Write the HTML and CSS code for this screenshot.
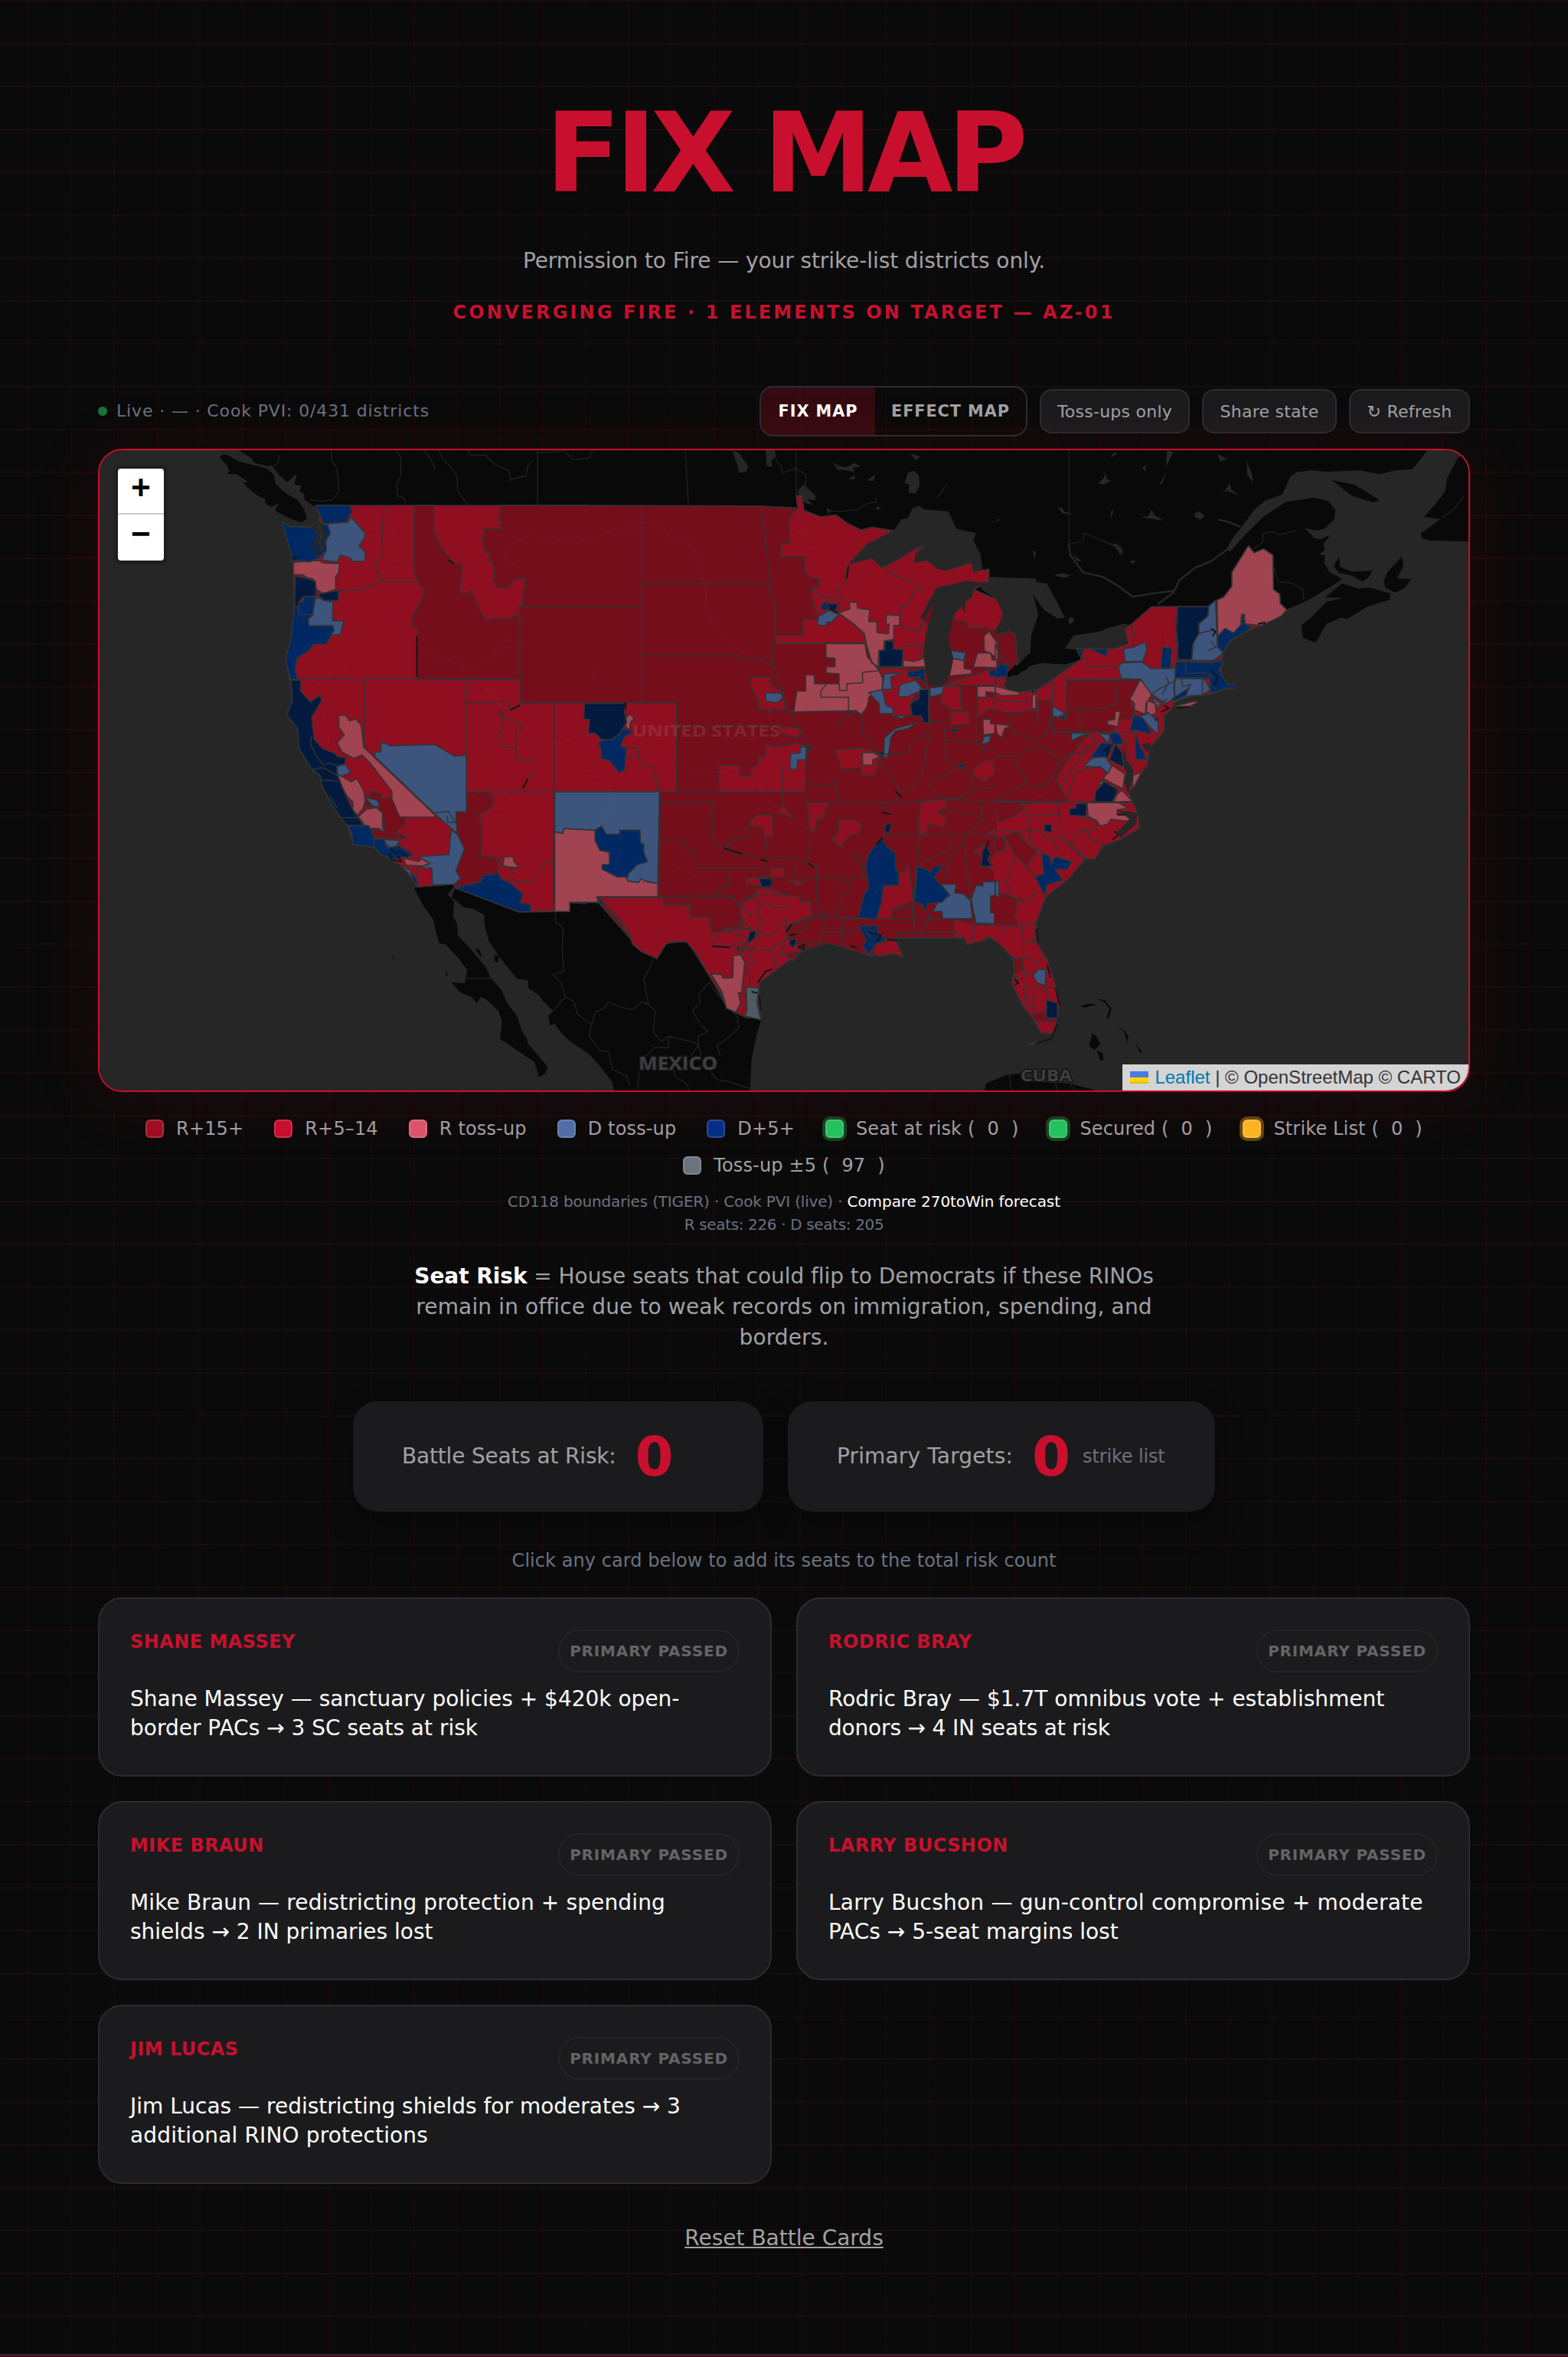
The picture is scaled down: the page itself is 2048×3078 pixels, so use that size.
FILE: index.html
```html
<!DOCTYPE html>
<html lang="en">
<head>
<meta charset="utf-8">
<title>Fix Map</title>
<link rel="stylesheet" href="styles.css">
</head>
<body>
<main class="page">
  <header class="hero">
    <h1 class="hero-title">FIX MAP</h1>
    <p class="hero-sub">Permission to Fire — your strike-list districts only.</p>
    <p class="hero-alert">CONVERGING FIRE · 1 ELEMENTS ON TARGET — AZ-01</p>
  </header>

  <div class="toolbar">
    <div class="status"><span class="status-dot"></span><span>Live · — · Cook PVI: 0/431 districts</span></div>
    <div class="controls">
      <div class="segment"><button class="seg seg-on">FIX MAP</button><button class="seg">EFFECT MAP</button></div>
      <button class="btn btn-toss">Toss-ups only</button>
      <button class="btn btn-share">Share state</button>
      <button class="btn btn-refresh">↻ Refresh</button>
    </div>
  </div>

  <section class="map">
    <svg class="map-canvas" viewBox="130 588 1788 836">
      <rect class="water" x="130" y="588" width="1788" height="836"/>
      <!-- Canada and Mexico -->
      <g transform="translate(120 580) scale(.40816)">
        <path class="land" d="M408 42L420 32 440 38 470 55 560 78 580 95 590 130 625 160 660 180 680 210 688 240 670 250 640 240 585 213 598 190 575 200 555 190 555 175 530 165 500 140 485 125 500 120 460 95 432 96 440 85 430 65Z"/>
        <path class="land" d="M455 10L490 32 512 45 520 60 560 70 575 68 600 100 625 122 655 95 648 130 670 132 665 150 680 160 680 178 710 198 1600 198 1600 10Z"/>
        <path class="river" d="M600 35L596 60 580 70M765 20L768 50 785 80 790 150 770 178 740 183 700 178M972 20L990 45 988 100 975 130 978 165 1000 172 1003 192M1065 20L1085 50 1100 82M1110 20L1125 50 1150 75 1168 100 1170 150 1203 192M1203 20L1210 35 1260 35 1290 65 1335 85 1340 115 1370 105 1390 102 1395 70 1428 30 1520 28 1530 48 1580 50M1428 20V195"/>
      </g>
      <g transform="translate(700 580) scale(.40816)">
        <path class="land" d="M-10 10H1600V900H900V400L700 200H-10Z"/>
        <path class="river" d="M5 20V195M0 28L90 22 120 50 170 45 180 20M478 20L488 195M833 20V170M765 48L785 70 788 92 830 78 865 98 862 130 880 160M930 215L980 215 1030 210 1060 190 1090 185 1090 168M1285 170L1315 128"/>
        <path class="water" d="M628 20L650 28 665 50 680 72 672 88 650 92 642 60ZM735 20H765L768 40 755 50 754 72 738 70ZM1190 92L1210 85 1225 100 1228 130 1215 158 1192 155 1195 130 1180 125ZM838 150L855 130 895 165 893 180 870 175 885 195 865 190 845 175ZM950 55L965 68 990 75 1020 60 1040 72 1015 75 1020 90 985 82 965 82ZM1200 30L1230 40 1215 52ZM1000 112L1020 98 1020 112ZM1060 115L1085 98 1080 118ZM930 205L945 212 935 225ZM1460 245L1488 238 1465 256ZM1085 205L1105 198 1095 212Z"/>
      </g>
      <g transform="translate(1300 580) scale(.40816)">
        <path class="land" d="M-10 10H1390L1335 80 1278 84 1230 96 1170 84 1060 88 1010 83 965 90 945 102 918 162 865 180 830 208 790 262 760 300 740 335 750 345 800 290 860 230 930 185 1020 171 1065 182 1088 210 1085 240 1055 270 1030 276 990 268 1020 300 1040 305 1072 290 1050 320 1055 340 1035 352 1055 356 1052 380 1070 410 1110 432 1075 455 1000 500 930 530 700 600 0 800Z"/>
        <path class="land" d="M1055 490L1110 445 1160 462 1200 460 1265 478 1262 498 1190 520 1125 560 1105 555 1060 575 1025 635 985 620 980 580 1015 550 1060 505 1115 492ZM1243 440L1255 410 1300 360 1306 390 1285 430 1332 432 1310 460 1280 475 1248 460ZM1083 390L1100 360 1103 392 1140 408 1208 405 1195 425 1175 440 1140 420 1100 412ZM1076 115L1150 130 1228 178 1210 187 1140 165ZM1516 18V312L1390 308 1364 300 1362 285 1425 240 1372 233 1410 190 1440 150 1445 110 1480 45Z"/>
        <path class="riverw" d="M745 335L690 375 640 395 590 435 570 475 520 512M570 470L520 475 440 488 395 455 345 425 280 410 240 355 234 320M785 265L750 250 712 241"/>
        <path class="river" d="M236 20V320L280 310 285 285 320 300 370 320 400 330 410 355M825 335L855 315 858 285 885 280 910 290 965 275M890 390L905 440 950 445 985 465 985 500M1500 165L1470 205 1430 235M0 250L15 240"/>
        <path class="water" d="M470 75L495 60 480 72 482 90ZM550 20L570 25 545 75 548 45ZM710 30L730 42 745 48 720 55ZM805 50L812 75 820 90 825 125 805 95ZM715 155L735 150 750 125 755 145 780 165 745 150ZM330 125L350 105 350 85 356 110 368 118 390 110 345 130ZM465 235L490 230 500 210 510 228 540 245 500 238ZM636 222L655 215 670 230 655 242 638 232ZM198 200L215 205 220 215 250 225 215 222ZM250 350L258 360 278 375 260 375ZM188 420L215 413 242 420 220 428ZM430 375L450 370 440 385ZM232 565L240 552 255 560 240 578ZM120 340L130 345 125 370ZM525 130L545 90 535 125ZM380 25L392 30 370 42ZM370 215L380 212 368 240ZM340 310L365 322 390 318 408 340 400 355 385 330Z"/>
      </g>
      <g transform="translate(500 1000) scale(.40816 .33333)">
        <path class="land" d="M100 478L232 465 207 505 228 530 225 590 238 620 240 665 275 710 300 745 330 790 345 830 380 880 400 935 430 980 445 1040 460 1065 465 1090 490 1125 528 1180 520 1205 500 1220 490 1180 485 1160 430 1115 375 1070 382 1000 370 960 330 915 315 905 300 930 285 905 250 890 218 848 262 852 270 800 240 750 200 700 180 695 160 600 130 550Z"/>
        <path class="land" d="M232 480L435 573H598V536H700L780 630 800 700 878 757 905 700 972 690 1040 815 1100 950 1212 990 1195 1060 1180 1150 1175 1275H740L735 1240 690 1170 660 1130 600 1080 570 1045 550 1010 535 1018 530 980 545 960 515 925 500 900 465 870 465 840 430 835 380 760 340 690 325 620 325 585 290 560 260 555 220 515Z"/>
        <path class="land" d="M296 712L310 722 318 750 305 738ZM358 740L372 745 368 772 357 765ZM200 805L208 815 205 828ZM28 740L36 752 35 762ZM20 400L32 412M20 435L32 452"/>
        <path class="river" d="M262 833H345M553 575L552 612 577 635 575 720 578 805 545 818 570 850 585 905 545 960M585 905L612 925 622 972 668 1015 660 1060 695 1115 722 1120 735 1190 780 1215 790 1250M668 1015L680 965 710 950 720 925 760 945 800 955 830 925 850 935 872 960 865 1040 890 1080 915 1060 1000 1085 1010 1095 985 1140M868 757L835 835 850 935M915 1060V1105L870 1103 840 1140M1045 850L1010 895 1015 930 990 960 1020 1020 1040 1040 1010 1060 1010 1095 1020 1140M1045 850L1065 885 1080 910 1110 945 1135 985 1138 1030 1100 1070 1070 1095 1080 1140M930 1190L935 1215 975 1250 980 1272M820 1195L815 1272M1050 1200L1070 1230 1100 1235 1150 1255 1175 1265"/>
      </g>

      <!-- West -->
      <g transform="translate(120 580) scale(.40816)">
        <path class="r1" d="M718 196H1580V1470L1528 1466V1495L1368 1497 1163 1420 1160 1408 1043 1416 1020 1385 985 1345 930 1312 900 1290 835 1280 820 1225 765 1150 735 1090 730 1060 703 1040 663 975 658 910 624 865 640 825V790L633 755 630 730 620 690 637 620 648 520 645 420 643 380 636 345 608 247 630 262 700 266 720 250 730 230Z"/>
        <path class="r2" d="M1033 196H1093V280L1112 310 1110 322 1162 385H1185L1182 440 1175 465 1190 483 1212 467 1240 530 1262 562 1300 556 1345 558 1356 542 1370 560V753H1040L1042 590 1023 575 1028 548 1045 520 1068 470 1042 440 1033 410ZM1305 196H1580V828H1372L1368 520H1376L1387 427 1352 432 1330 461 1300 458 1285 440 1290 405 1283 378 1270 375 1272 348 1258 346 1250 305 1258 270H1310L1312 250 1300 245 1308 230ZM1200 1112H1270L1272 1130H1285L1283 1155 1262 1175 1238 1180 1245 1215V1318L1297 1322 1300 1370 1250 1382 1245 1400 1168 1418 1165 1365 1192 1295 1168 1245 1165 1178H1200ZM885 1130L892 1108 925 1118 930 1135 962 1132 985 1193H1003V1218L970 1243 1005 1253V1262L905 1258 880 1230 930 1240 938 1225 930 1180 910 1162 870 1158Z"/>
        <path class="r3" d="M645 378L725 372 740 380 792 382 790 410 780 425V465L742 478 718 465 715 440 705 430 690 428 675 418H645ZM790 868H812L825 885 845 880 862 900 870 970 1105 1193H985L960 1135V1110L940 1085 910 1045 885 1015 865 995 838 1005 800 985 785 955 808 930 790 905ZM785 1055L830 1080 848 1070 870 1110 875 1140 868 1165 850 1187 835 1170V1145L815 1125 800 1095ZM853 1192L880 1168 910 1163 930 1180V1225L938 1243 920 1230 880 1228ZM998 1325L1045 1335 1060 1322 1082 1342 1060 1350 1005 1347ZM1320 1320H1348L1350 1335 1368 1355 1313 1352ZM1480 1240L1503 1247 1508 1230H1580V1466H1528V1495H1480Z"/>
        <path class="b1" d="M750 255L820 250 830 233 848 255 875 285 872 300 855 325 875 345V375H830L828 365 795 355 785 378 735 370 750 340 748 310 763 285ZM720 488L742 500 772 505 770 565H806L795 608 762 614 775 595 770 580 695 582 692 560 708 545V515ZM925 952L955 965 1098 961 1160 998 1198 995V1176H1165L1168 1245 1105 1190 906 1000V985H925ZM1150 1235L1170 1248 1192 1295 1165 1365 1180 1390 1160 1408 1090 1410 1088 1357 1045 1355 1082 1342 1045 1320 1142 1313ZM785 1030L810 1025 830 1050 800 1062 785 1055ZM935 1265L987 1268 965 1298 940 1280ZM873 1130L915 1140 920 1162 900 1158ZM1480 1112H1580V1232L1508 1230 1503 1247 1480 1240ZM985 1345L1020 1365 1025 1385Z"/>
        <path class="b2" d="M718 196H825L832 215 815 248 740 255 730 230ZM608 247L632 263 700 266 720 245 735 255 755 260 763 285 748 310 750 340 725 365 695 377 665 373 640 375 636 345ZM648 520H662V545H705L692 560 695 582 770 580 775 595 750 640H710L695 660 657 685 650 720 658 752H636L620 690 637 620ZM662 505H675L678 487 712 490V515L705 545H662ZM1163 1420L1245 1400 1250 1382 1300 1373 1310 1392 1340 1405 1380 1440 1370 1468 1402 1472 1405 1495 1368 1497ZM820 1222L885 1220 903 1258V1290L835 1280 833 1250ZM905 1262L935 1265 945 1292 985 1285 1030 1315 960 1330 925 1312 903 1290ZM1023 1370L1040 1390 1043 1416 1028 1400Z"/>
        <path class="b3" d="M650 422L690 430 715 440 718 487H678L662 505V520L648 518ZM722 480L790 468 788 500 742 500ZM636 755H668V790L700 825 730 803 735 820 718 850 703 875 712 945 740 975 780 990 785 1000 812 1003 810 1022 785 1030V1055L800 1095 835 1170 870 1220H815L765 1150 735 1090 730 1060 703 1040 663 975 658 910 624 865 640 825V790Z"/>
        <path class="water" d="M700 266L712 250 705 225 722 240 740 260 748 290 742 335 715 352 707 342 735 325 730 305 718 330 698 332 712 310 722 290Z"/>
        <path class="edge" d="M935 196L925 365 903 390 925 420V440M925 440H1040M780 470L860 465 925 440M636 752H1370M872 755V970M1198 755V1000M1200 828H1275L1320 820 1345 850 1380 830H1580M1480 828V1495M1200 1112H1580M1040 610V753M1368 520H1580M1305 850L1325 880 1360 885 1380 910 1357 912V1010H1425L1435 1028 1400 1065 1375 1105M1305 850L1313 910 1297 930 1318 970H1357M1345 850L1320 850M703 935L700 960 720 1000 740 1025 765 1020 785 1030M705 1040L740 1035 785 1060M735 1075L785 1078M760 1125L785 1165M803 1195H850M1088 1180L1140 1175 1165 1210M1138 1190V1210H1165M1320 1392L1400 1400 1425 1385 1450 1385 1460 1340 1480 1332M1043 1416L1040 1355M725 255L735 285 728 320 740 340M1300 1322L1310 1345 1350 1360 1345 1375"/>
        <path class="coast" d="M640 360L655 362 645 370M955 1295L975 1310 990 1335 960 1330 950 1310M740 1045L755 1055 745 1065M1160 383L1140 370M1040 615V745M980 1300L1010 1320M1380 1100L1395 1070M1340 850L1370 835"/>
        <path class="vein" d="M875 275L900 272 920 265 935 290 960 285 975 225 1000 200M930 410L960 390 980 395 1005 385 1030 410M1375 400L1320 360 1330 330 1420 278 1440 295 1520 300 1568 320M1040 640L1100 680 1200 710 1260 700 1320 625 1390 640M670 800L720 770 760 750 770 715 820 720M735 840L760 930 755 960M1568 930L1520 950 1480 1010 1440 1040M1200 1112L1290 1170 1320 1165 1350 1120M1262 780L1290 800 1310 845 1280 820Z"/>
      </g>

      <!-- Center -->
      <g transform="translate(700 580) scale(.40816)">
        <path class="r2" d="M0 196L720 198 838 205 910 232 1040 275 1145 277 1005 380 1075 365 1245 323 1448 442 1400 465 1480 500 1495 545 1480 590 1520 595 1545 640 1540 705 1500 750 1580 790V1580H300L200 1466H108V1495H0Z"/>
        <path class="r1" d="M838 205L833 165H850L858 213 910 232 960 227 1000 255 1040 275 1075 266 1145 277 1060 320 1005 380 1075 365 1110 395 1200 345 1245 323 1210 375 1250 372 1310 405 1395 378 1400 408 1450 400 1448 442 1370 445 1300 455 1260 500 1235 560 1255 580 1245 713H1098L1060 655 1053 637H765V612H853V560H905L885 500 878 460 905 455V430L880 428 860 412V360H783V318H812L810 235ZM1400 465L1480 500 1495 545 1480 590 1445 600 1445 587H1382L1380 568 1335 560 1340 540 1395 490ZM1305 770L1395 740 1450 720 1510 750 1490 772 1412 772ZM0 828H450V1112H58V1495H0ZM687 745H752V770L790 795 800 850 755 848 750 862 735 848H713L710 812 690 780ZM587 1028L652 1025V1062H690V1032L710 1028 712 1000H735V960L765 968 815 962 835 955 865 965 862 1112H587ZM775 903L830 905 850 918 835 940 780 925ZM952 978L1045 973 1085 985 1105 990 1085 1060H1042L1038 1035 975 1040 970 1010ZM1095 718L1190 716 1225 780 1200 830V870L1150 875 1100 830 1108 750ZM1412 812L1540 805 1568 830 1560 850 1440 848 1430 870H1412ZM1295 775H1358L1362 850H1330L1297 830ZM1325 855H1383L1388 895 1330 900ZM200 1450L405 1448 408 1473H495L497 1513H558V1563L600 1580H300L270 1530ZM687 1203L710 1185 757 1188 760 1255H730L727 1228 687 1220ZM868 1147H940L925 1175 920 1200H898L895 1238H875ZM968 1200L1025 1203 1045 1220 1030 1248 1005 1250 975 1290 945 1265 968 1240ZM1112 1415L1160 1412 1163 1370 1180 1368 1182 1348H1195L1207 1460 1140 1490V1520H1088ZM1232 1138H1313L1310 1165 1283 1175 1310 1190V1225L1255 1215 1250 1250H1225V1200ZM1400 1040L1430 1015 1480 1008 1460 1030 1475 1050 1435 1078 1400 1060ZM1443 1250L1475 1215 1580 1180V1580L1530 1500 1520 1370 1450 1360 1460 1320 1520 1300 1568 1310 1568 1250ZM650 1470L690 1445 715 1420 760 1425 805 1445 880 1505 800 1515 740 1560 700 1580 655 1540 700 1480ZM748 1357H793V1385H750ZM808 1392L860 1400 835 1415ZM1338 1520L1400 1535 1530 1540V1580H1338ZM775 1180L790 1150 820 1195ZM672 1388L735 1385 715 1412 672 1408ZM1400 1300L1435 1280 1425 1320Z"/>
        <path class="r3" d="M928 638H1053L1060 680 1095 720 1110 750 1108 785 1065 810 1060 840 1042 865 1025 853 825 857 835 790H863V738H890L892 767H970V735L928 732 930 712H957V685L928 683ZM968 540L1005 527 1002 506H1027L1030 525 1068 530 1065 568H1090L1092 603 1128 607 1130 575H1120L1122 545 1165 550 1163 580H1145V625L1115 630 1113 658 1098 660 1095 713 1075 700 1060 650 1050 605 1010 570ZM1175 690L1210 695 1247 683 1245 713H1175ZM1045 987H1080L1103 1000 1078 1010V1027H1045ZM1335 685L1370 690V718L1395 722 1393 735 1322 742ZM1433 615L1450 598 1475 635 1480 685 1435 660ZM1413 668H1455L1460 690H1475V715L1400 713ZM1412 775H1490L1545 795 1540 805 1440 792V810H1412ZM1430 880H1455V895L1520 900 1495 915V937L1480 925 1432 930ZM285 880L300 863 315 878 303 890 300 915 288 905ZM60 1240L85 1245 90 1230 190 1235V1270L210 1300 235 1310V1340L212 1360 260 1385 285 1382 295 1398 330 1402 335 1390 355 1400 390 1405V1448H195L200 1466H108V1495H60Z"/>
        <path class="b1" d="M905 550L940 532 970 545 945 570H930V582L900 578ZM735 795L785 797 792 812 770 827 735 823ZM815 990L845 988 847 968H866L865 1010H838L835 1040H813ZM1115 735L1175 732 1135 745 1140 785H1108L1120 835 1143 845V862H1100L1098 830 1065 795 1108 785ZM1165 770L1215 755 1240 785 1190 808H1160ZM1222 890L1190 910 1150 918 1135 940 1132 970 1125 1003H1113L1115 940 1150 910ZM1140 868L1178 868 1175 878ZM1260 780L1305 775 1300 798 1262 810ZM1328 660L1375 667 1370 692 1330 685ZM60 1112H395L390 1405 350 1398 335 1390 330 1402 295 1398 285 1382 230 1350 190 1280V1235L90 1230 85 1245 60 1240ZM1297 1408H1345L1340 1435 1370 1440 1390 1460 1397 1518H1300V1495H1270L1290 1460 1325 1445ZM1393 1455L1410 1410 1430 1415V1400L1480 1400 1478 1445H1455V1500H1468L1467 1535 1408 1532ZM1435 935L1457 932 1450 955 1425 960Z"/>
        <path class="r3 flat" d="M188 1262L210 1300 235 1310V1340L212 1360 190 1380Z"/>
        <path class="b2" d="M912 515L935 502 945 530H915ZM868 965L882 970 875 985ZM1190 730L1243 718 1245 760 1255 780 1225 745 1190 745ZM1450 725L1478 722 1485 703 1512 708 1505 745 1452 742ZM200 955L265 930 280 910 312 920 285 935 270 965 290 975 283 1045 265 1050 235 1012 208 1005 210 985ZM190 1235L210 1222 225 1248H268V1235H333L335 1278H345V1305L357 1337 325 1345 295 1375V1385L262 1385 212 1360V1345H235V1305L205 1300 190 1270ZM1090 1280L1105 1260 1120 1285 1150 1310 1152 1365 1160 1370V1412H1112L1105 1470 1088 1520 1032 1515 1050 1440 1065 1420 1055 1350 1065 1310ZM1218 1352L1250 1360 1265 1370 1270 1355 1303 1348 1275 1385 1300 1415 1322 1440 1300 1465 1255 1470 1245 1495 1235 1470 1208 1465ZM195 1450L222 1468 210 1475ZM1350 1030L1370 1018 1368 1035ZM1330 910H1348V920H1330ZM1035 1545L1090 1540 1090 1568H1040Z"/>
        <path class="b3" d="M930 510L965 512 962 530H940ZM1117 630H1145L1143 655 1175 658 1172 712H1100L1098 662 1117 658ZM1198 830L1225 815 1228 785H1256L1257 893 1240 890 1235 870H1205ZM155 830H288L283 850 290 890 265 930 240 945 210 945 190 925H168L172 880 153 880ZM712 1390L755 1390V1415L725 1418ZM1425 1340L1430 1300 1440 1282 1455 1310 1445 1330 1460 1350 1420 1350ZM1118 1220L1138 1210 1130 1245 1115 1240ZM1098 990L1112 980 1112 1000Z"/>
        <path class="edge" d="M338 196V828M338 445H752M338 677H650L680 692 720 685 765 715 795 830 850 915 865 960 862 1112M0 520H338M0 828H450V1112M450 903H830M0 1112H862M58 828V1495M720 198L752 445 740 475 765 500V637H1053M755 637L760 715M800 857L1025 855 1045 870 1043 920 1085 970 1105 1020 1165 1110 1150 1145M866 1147H1115L1110 1160 1135 1180M397 1112L395 1448 625 1445 660 1490M397 1145H563L567 1275 600 1295 625 1275 605 1295 630 1310 680 1315 720 1325 780 1330 830 1325 870 1340 877 1240 862 1112M870 1342L897 1350V1470L925 1500 920 1580M897 1387L1058 1385M1043 1385L1045 1340 1015 1330 1015 1313H1045M1105 1252H1568M1110 1148L1310 1138 1568 1142M1228 1252L1208 1520M1370 1258L1397 1518M1258 780L1260 930 1235 1060 1205 1105 1175 1110M1412 775V960M1030 1520H1137V1580M397 1270H480V1297L505 1300V1357H735M620 1357L615 1415 583 1420V1445M735 1330V1390M830 1345V1382L890 1390M862 1085L920 1092 960 1082 970 1147M878 460L925 490 955 492V505M995 390L992 440 960 467 975 490 968 540M1112 400L1160 425 1230 448M1210 465L1195 515 1165 520V580M1210 465H1240M1255 575H1230V600L1165 585M1175 645H1210V640H1230V690M960 900L1025 853M1045 730L1095 725M970 767L972 788H995V767L1045 763V730M912 790V810H1000V855M930 767L912 790M1100 995L1195 985 1195 960 1235 940 1255 925M1260 885L1305 890 1310 945 1380 955 1412 960M1310 945V1010L1340 1025M1265 1075L1310 1060 1345 1030 1370 1050 1395 1055 1390 1110 1345 1135 1290 1130 1265 1100ZM1412 960L1440 980 1470 985 1495 970M1395 1060L1390 1110 1568 1080M1568 1080L1480 1142M1310 1165L1370 1180 1420 1195 1430 1160 1410 1155M1375 1252L1440 1190M790 1028V1112M790 1112L792 1155M285 967L328 975V1003H290M338 1003V1028L375 1030V1068L392 1070V1112M0 1370L40 1332H58M1228 1345L1270 1320 1320 1300 1340 1258M1370 1270L1320 1330 1310 1400M960 1405L1005 1400V1425L975 1440 980 1480 960 1495 965 1520 1030 1520M920 1560H1000M1140 1490L1205 1480V1560M1255 1520L1250 1568M1300 1518H1255V1500M1358 772L1365 850M1465 840L1540 850 1560 880M1520 940L1540 980 1568 985M685 1225H672V1258L632 1262 610 1280M735 1305L740 1260"/>
        <path class="coast" d="M1000 390L995 430M280 830H288L286 850M600 1292L660 1312M720 1328L740 1335M1105 1178L1135 1184M1090 1280L1110 1258M965 540L940 525M870 1340L890 1355M1440 1290L1450 1270M1150 1110L1170 1130"/>
        <path class="vein" d="M0 295L60 298 120 320 210 290 260 270 340 268 400 265 430 300 490 312 525 380 545 470 540 540 590 600 650 660 750 710M450 1030L580 1050 640 1035 700 1060 740 1140 790 1170 870 1230M150 1058L220 1070 245 1110 240 1160 215 1215M830 285L865 262 860 280ZM850 325L930 335 935 370 900 405M65 960L120 940 160 925M445 1350L520 1390 570 1380M165 1430L175 1370 185 1280M110 645V660M180 715L185 750"/>
        <path class="seam1" d="M0 831V1109M0 1115V1490"/>
        <path class="seam2" d="M0 200V517M0 523V825"/>
        <path class="water" d="M1003 383L1060 320 1145 277 1170 240 1190 237 1205 205 1225 197 1240 208 1320 215 1345 270 1408 285 1400 310 1422 350 1430 400 1400 408 1395 378 1310 405 1285 400 1250 372 1210 380 1215 350 1245 323 1220 325 1160 368 1105 393 1075 365ZM1300 455L1330 450 1375 437 1425 445 1400 465 1395 490 1372 500 1375 540 1360 520 1340 540 1318 625 1335 680 1325 740 1305 770 1275 778 1255 765 1240 680 1245 620 1255 580 1275 510 1240 560 1230 555 1260 500 1280 460ZM1450 425L1600 430V700L1545 670V640L1520 595 1480 620 1470 600 1495 545 1480 500 1425 465V445L1448 442ZM1500 750L1600 710 1600 790 1540 792Z"/>
      </g>

      <!-- East -->
      <g transform="translate(1300 580) scale(.40816)">
        <path class="land" d="M115 440L200 520 240 600 300 640 280 680 225 700 110 705 70 740 30 740 70 700 112 665V610L138 545 120 480Z"/>
        <path class="water" d="M-6 425L165 445 205 520 222 555 200 558 155 530 120 480 138 545 115 610 112 665 70 710 65 610 45 597 10 610 28 545 0 490ZM20 770L75 750 110 710 150 700 225 705 300 680 225 735 130 790 60 795ZM222 655L250 612 330 600 415 575 430 580 420 635 380 655 260 657ZM345 592L410 575 420 590Z"/>
        <path class="r1" d="M0 750L25 765 40 795 130 790 280 685 260 655 380 655 425 638 415 590 437 575 500 520H683L708 500 730 490 757 455V410L810 325 828 348 858 335 888 355 890 465 910 480 912 510 933 530 915 550 850 580 800 600 750 630 728 670 725 700 720 740 735 770 740 782 690 800 640 805 580 820 560 850 540 870V920L495 970 485 1030 470 1050 440 1100 425 1110 440 1145 458 1190 460 1230 400 1265 345 1285 320 1327H288L235 1390 160 1450 130 1535V1580H0Z"/>
        <path class="r2" d="M8 610L45 597 65 610 72 705 30 700 8 650ZM228 755H462L440 800 430 830 445 860 435 880 380 885V920H183V870L230 870 225 850ZM0 850L50 860 140 850 135 820H180L183 922H300L240 1000 195 1070 228 1145H0ZM0 1145H115L95 1165 60 1190 10 1210ZM30 1255L70 1240 90 1270 135 1305 98 1352 60 1310ZM0 1430L35 1440 70 1460 62 1510 75 1543H0ZM0 1255L30 1260V1300H0Z"/>
        <path class="r1" d="M80 1150L160 1145 205 1150 205 1185 110 1190Z"/>
        <path class="r3" d="M708 500L730 490 757 455V410L810 325 828 348 858 335 888 355 890 465 910 480 912 510 933 530 915 550 885 565 850 580 800 575 795 545H788L785 580 762 605 735 590 712 615ZM462 755L480 760 502 800 482 830 480 865 445 850V830L430 815 440 800ZM487 820L512 830 515 860 495 870 483 855ZM345 1070L375 1028 415 1055 408 1103ZM330 1088L345 1070 342 1090ZM390 1120L405 1107 438 1143 378 1145ZM440 1060L468 1048 440 1105ZM293 1147H395L425 1165 390 1170V1185H435L427 1207 370 1200 360 1215 335 1222 325 1205 297 1190ZM357 885L382 880 383 855H400L392 905 360 897ZM0 775L80 795 75 803 20 805 0 795ZM0 895L50 900 30 910 20 940 5 925ZM118 805L130 795V848L118 845ZM575 838L635 823 650 825 620 840ZM0 640L8 660V700L0 685Z"/>
        <path class="b1" d="M683 518L705 500 710 630 728 670 700 692H628L635 630 652 605V575L680 550ZM410 655L440 650 480 633 485 660 470 697H415ZM393 712L405 700 470 697 500 718 577 717 572 815 545 830 500 800 465 752 403 750ZM573 750H663V803L620 805 575 825ZM663 750H668L688 785 663 803ZM465 870L490 860 522 885 520 928 490 900ZM283 1030L310 1005 350 998 372 1030 360 1055 340 1035ZM242 925H300L270 935 245 950ZM330 925L368 930 362 958ZM183 838L222 860 205 875 183 870ZM0 1400H12V1448H0ZM498 805L530 830 520 845Z"/>
        <path class="b2" d="M712 615L735 590 762 605 790 575V545H797V575L820 582 800 602 752 628 728 665 712 650ZM577 695L690 700 725 687 728 705 715 722 738 760 745 770H768V782L740 780 690 797 685 750 575 747ZM535 650L565 652 560 718H530ZM260 655L282 655 275 685ZM298 652L358 658 355 678ZM430 915L445 865 475 880 500 925 485 925 450 915ZM447 920L460 960 485 1008H450ZM305 1003L340 955 380 960 360 1000ZM365 925L395 925 410 960 375 960ZM148 1312L172 1315 180 1345 190 1320 245 1335 230 1360 190 1360 215 1395 165 1410 158 1445 128 1385 155 1375ZM0 725L15 703 42 708 35 745 0 745ZM565 815L620 780 610 805 570 822ZM205 870L232 875 215 882ZM505 870L525 880 515 888Z"/>
        <path class="b3" d="M583 520H683L680 550 650 575 652 605 632 640 628 690H585L577 580ZM365 1010L385 960 405 985 410 1033ZM320 1112L350 1080 392 1105 375 1145H318ZM258 1150H293L290 1190 237 1187V1165H258ZM158 1217H180V1243L158 1238ZM110 787L128 785 122 798Z"/>
        <path class="seam2" d="M0 860V1138M0 1148V1235M0 1440V1538"/>
        <path class="seam1" d="M0 1305V1395M0 1545V1580"/>
        <path class="edge" d="M225 752H465M183 755V922H440L462 915M0 1142L440 1147M385 755L388 830 345 845 230 850M225 735L228 755M280 850L268 880 275 918M437 575L443 650M578 580L585 640 570 790M577 695H725M575 747H690M583 520V580M710 500V650M68 1030L65 1010 90 985 150 965 180 990 205 1015 195 1050 160 1090 110 1095 90 1060ZM110 955L130 945 160 930 183 860M125 900L135 870 132 850 50 860 55 925 95 930 110 955M0 1000L50 995 75 1000M0 1142L100 1080M195 1095L215 1095 230 1060 275 1000 325 950 290 925M205 1020L240 990 270 990 300 960M228 1145L255 1050 340 1030M205 1150V1235L225 1275 288 1327M105 1195L108 1235 145 1238M145 1238L160 1262 215 1265 240 1275 275 1238M185 1265L205 1310M110 1240L115 1280 155 1310M70 1240L98 1270M290 1235L310 1270 340 1275 345 1290M270 1200L300 1195 325 1215 320 1235H270M240 1275L290 1325M98 1352L128 1385M60 1320L50 1360 35 1400 55 1450 98 1465 135 1430M98 1465L70 1460M0 1543L95 1545 130 1535M0 1240H108M0 1560L30 1568M500 800L530 780 570 760M545 745L555 760 535 800M530 830L550 815M595 750L600 775 625 770 610 790M608 697L610 735 670 730 700 745M690 630L705 650 680 660M652 605L695 595M293 685L295 713 400 710M415 695H470M0 820L100 825 105 800M415 925L425 990 440 1045M450 1010H485"/>
        <path class="coast" d="M540 835L555 845 530 857M690 722L712 745 700 770M580 845L620 840M380 1240L400 1245 375 1265M390 1185L435 1187 445 1195M840 575L865 570M690 590L705 600 695 615M345 985L365 965 355 1000"/>
        <path class="water" d="M408 960L420 1010 442 1045 440 1070 425 1115 412 1080 420 1050 410 1030ZM390 1172L455 1180 450 1215 400 1260 385 1245 430 1200 410 1185ZM468 960L495 955 497 972 485 985Z"/>
        <path class="vein" d="M240 780L290 740 340 750M535 590L550 640 545 690M780 460L800 440 810 430M810 348L770 400M190 1200L220 1260 240 1340M130 1130L230 1090"/>
      </g>

      <!-- Texas and Louisiana -->
      <g transform="translate(500 1000) scale(.40816 .33333)">
        <path class="r1" d="M690 515L895 515 1150 640 1420 640 1415 680 1350 720 1270 790 1205 850 1200 930 1212 990 1160 985 1100 950 1085 900 1040 815 1000 730 972 690 928 688 905 700 878 755 830 730 800 700 780 630Z"/>
        <path class="r2" d="M897 512H1115L1165 590 1145 595V635H1090V652H1050L1048 593H985V545H897ZM1290 640L1350 600 1410 590 1568 600V750L1530 710 1480 712 1420 695 1350 720 1300 680ZM1285 738L1335 725 1315 765Z"/>
        <path class="r1" d="M1145 595L1142 545 1190 508 1300 510 1335 512 1335 535 1368 530 1372 588 1295 625 1290 680 1240 720H1145L1170 680 1090 640H1180Z"/>
        <path class="r3" d="M1050 815L1085 818 1088 832 1120 830 1122 745 1140 742 1160 705 1145 740 1158 770 1148 890H1137L1145 930 1130 965 1100 950 1085 885Z"/>
        <path class="gr" d="M1163 867L1203 870 1197 930 1210 995 1158 980 1165 960Z"/>
        <path class="b3" d="M1175 650L1195 645 1190 675 1165 700ZM1303 680L1325 680 1315 712 1300 700ZM1130 712L1145 712 1135 725Z"/>
        <path class="b2" d="M1520 600H1568V750L1545 740 1530 690 1520 640Z"/>
        <path class="edge" d="M1185 510L1205 550 1200 595 1220 605 1195 640M1200 545L1235 538 1240 555 1300 555M1145 545L1185 600M1372 588L1415 580 1410 650 1400 690M1160 705L1185 710 1170 740 1190 770 1160 780M1160 790L1175 830 1173 865M1240 720L1260 760 1255 800M1195 650L1245 665 1290 595 1290 645M1070 655L1055 705 1110 708 1145 690M1285 700L1270 740 1300 735M1355 600V640L1300 665M1410 650H1520M1158 890L1165 960M1325 690L1360 700 1400 685M1300 735L1350 720M1205 640L1200 690"/>
        <path class="coast" d="M1055 707L1110 712M1290 650L1310 620M1300 665L1325 658M1330 710L1350 700 1345 720ZM1200 850L1225 805 1245 798M1490 705L1510 700 1515 710M1180 885L1198 890M1205 900L1210 960"/>
      </g>

      <!-- Gulf coast and Florida -->
      <g transform="translate(1100 1000) scale(.53571 .33333)">
        <path class="r2" d="M0 600H275V648L190 655H130L135 700 148 750 125 735 98 745 65 740 0 712Z"/>
        <path class="r1" d="M272 600L325 622 430 628 440 625 455 618H470L473 690 500 760 520 860 530 940 515 1048H485L465 990 440 940 428 900 413 850 420 800 415 750 385 700 355 665 345 685 305 700 295 670 272 650ZM455 1095L472 1078 475 1085ZM80 700L130 680 148 750 125 735 98 745 80 740Z"/>
        <path class="r2" d="M418 752L440 755V805L420 815ZM460 970L498 965V990H523L520 1002H470Z"/>
        <path class="b2" d="M40 628L85 625 88 660 108 680 80 700 65 740 50 705 60 685Z"/>
        <path class="b1" d="M465 820L480 795 497 800 495 862 475 850ZM420 828L430 830 425 840Z"/>
        <path class="b3" d="M498 918L525 930V988H498Z"/>
        <path class="edge" d="M175 600V645M272 600V650M387 660L398 635M440 630L442 695 475 690M442 700V750L475 768 492 748M440 765L445 815 465 820M442 870H518M443 820V900L465 910 468 940 445 935M462 935L468 960M468 650L462 680 473 690M415 750L440 755M325 622L315 690M497 870L503 910M190 655L215 600M0 648H40M65 640L90 665 105 665M55 635L70 680M445 900V935"/>
        <path class="coast" d="M65 650L95 665 85 690M110 680L135 685M473 640L478 690M500 780L508 830M520 870L530 940M420 835L430 850 420 860M20 705L35 712M470 1090L510 1070 525 1010"/>
        <path class="land" d="M580 940L600 932 622 935 590 948ZM622 915L640 918 657 950 650 992 645 985 652 950 638 925ZM610 1048L620 1060 630 1090 615 1115 602 1095ZM620 1115L635 1125 637 1155H630ZM672 1020L690 1040 698 1060 695 1085 688 1045ZM715 1085L733 1125 725 1122ZM765 1130L768 1140M347 1275L350 1245 400 1212 435 1205 450 1235 555 1245 625 1275Z"/>
        <path class="river" d="M408 1212L412 1272M520 1242L525 1272M555 1250L570 1272"/>
      </g>
      <g class="names">
        <text class="name-us" x="826" y="962" textLength="193" lengthAdjust="spacingAndGlyphs">UNITED STATES</text>
        <text class="name-other" x="834" y="1397" textLength="103" lengthAdjust="spacingAndGlyphs">MEXICO</text>
        <text class="name-other name-small" x="1333" y="1412" textLength="67" lengthAdjust="spacingAndGlyphs">CUBA</text>
      </g>
    </svg>
    <div class="zoom"><span class="zoom-btn">+</span><span class="zoom-btn">−</span></div>
    <div class="attribution">
      <svg class="flag" viewBox="0 0 24 16"><path fill="#4c7be1" d="M0 0h24v8H0z"/><path fill="#ffd500" d="M0 8h24v6H0z"/><path fill="#e0bc00" d="M0 14h24v2H0z"/></svg>
      <span><span class="leaflet">Leaflet</span> | © OpenStreetMap © CARTO</span>
    </div>
  </section>

  <div class="legend">
    <span class="key"><i class="swatch s-r15"></i>R+15+</span>
    <span class="key"><i class="swatch s-r5"></i>R+5–14</span>
    <span class="key"><i class="swatch s-rt"></i>R toss-up</span>
    <span class="key"><i class="swatch s-dt"></i>D toss-up</span>
    <span class="key"><i class="swatch s-d5"></i>D+5+</span>
    <span class="key"><i class="swatch s-green"></i>Seat at risk (<b>0</b>)</span>
    <span class="key"><i class="swatch s-green"></i>Secured (<b>0</b>)</span>
    <span class="key"><i class="swatch s-amber"></i>Strike List (<b>0</b>)</span>
    <span class="key"><i class="swatch s-gray"></i>Toss-up ±5 (<b>97</b>)</span>
  </div>
  <div class="meta">
    <p>CD118 boundaries (TIGER) · Cook PVI (live) · <span class="meta-link">Compare 270toWin forecast</span></p>
    <p class="meta-seats">R seats: 226 · D seats: 205</p>
  </div>

  <p class="explain"><strong>Seat Risk</strong> = House seats that could flip to Democrats if these RINOs <span class="loose">remain in office due to weak records on immigration, spending, and borders.</span></p>

  <div class="stats">
    <div class="stat stat-risk"><span class="snug">Battle Seats at Risk:</span><span class="stat-num">0</span></div>
    <div class="stat stat-primary"><span class="loose">Primary Targets:</span><span class="stat-num">0</span><span class="stat-note">strike list</span></div>
  </div>
  <p class="hint">Click any card below to add its seats to the total risk count</p>

  <div class="cards">
    <article class="card"><div class="card-head"><h2>SHANE MASSEY</h2><span class="badge">PRIMARY PASSED</span></div><p>Shane Massey — sanctuary policies + $420k open-border PACs → 3 SC seats at risk</p></article>
    <article class="card"><div class="card-head"><h2>RODRIC BRAY</h2><span class="badge">PRIMARY PASSED</span></div><p>Rodric Bray — $1.7T omnibus vote + establishment <span class="snug">donors → 4 IN seats at risk</span></p></article>
    <article class="card"><div class="card-head"><h2>MIKE BRAUN</h2><span class="badge">PRIMARY PASSED</span></div><p><span class="loose">Mike Braun — redistricting protection + spending</span> shields → 2 IN primaries lost</p></article>
    <article class="card"><div class="card-head"><h2>LARRY BUCSHON</h2><span class="badge">PRIMARY PASSED</span></div><p><span class="looser">Larry Bucshon — gun-control compromise + moderate</span> PACs → 5-seat margins lost</p></article>
    <article class="card"><div class="card-head"><h2>JIM LUCAS</h2><span class="badge">PRIMARY PASSED</span></div><p>Jim Lucas — redistricting shields for moderates → 3 <span class="loose">additional RINO protections</span></p></article>
  </div>
  <div class="reset"><span class="reset-link">Reset Battle Cards</span></div>
</main>
<footer class="foot"></footer>
</body>
</html>
```
FILE: styles.css
```css
* { box-sizing: border-box; margin: 0; padding: 0; }
body {
  background-color: #0a0a0a;
  background-image:
    linear-gradient(rgba(200, 16, 46, .09) 2px, transparent 2px),
    linear-gradient(90deg, rgba(200, 16, 46, .06) 2px, transparent 2px);
  background-size: 56px 56px;
  background-position: 36px 0;
  color: #a1a1a6;
  font-family: "DejaVu Sans", sans-serif;
  font-size: 28px;
  line-height: 40px;
}
.page { height: 3074px; padding: 128px 128px 0; }
.foot { height: 4px; background: #4a0a15; border-top: 2px solid #2c2c30; }
.snug { letter-spacing: -.18px; }
.loose { letter-spacing: .14px; }
.looser { letter-spacing: .23px; }

.hero { text-align: center; }
.hero-title { color: #c8102e; font-size: 144px; line-height: 144px; font-weight: 700; letter-spacing: -.05em; }
.hero-sub { margin-top: 49px; letter-spacing: -.08px; }
.hero-alert { margin-top: 31px; color: #c8102e; font-size: 24px; line-height: 32px; font-weight: 700; letter-spacing: 3.1px; }

.toolbar { display: flex; justify-content: space-between; align-items: center; height: 66px; margin-top: 80px; }
.status { display: flex; align-items: center; gap: 12px; color: #6b7280; font-size: 22px; letter-spacing: .86px; }
.status-dot { width: 12px; height: 12px; border-radius: 50%; background: #18773c; }
.controls { display: flex; align-items: center; gap: 16px; }
button { font-family: inherit; color: #a1a1a6; white-space: nowrap; }
.segment { display: flex; width: 350px; height: 66px; border: 2px solid #2c2c30; border-radius: 18px; overflow: hidden; }
.seg { flex: 1 1 auto; border: 0; background: none; font-size: 20.8px; font-weight: 700; letter-spacing: .045em; }
.seg-on { flex: 0 0 149px; color: #fff; background: rgba(200, 16, 46, .22); }
.btn { height: 58px; border: 2px solid #2c2c30; border-radius: 16px; background: #1b1b1d; font-size: 22px; letter-spacing: .25px; }
.btn-toss { width: 196px; }
.btn-share { width: 176px; }
.btn-refresh { width: 158px; }

.map { position: relative; height: 840px; margin-top: 16px; border: 2px solid #c8102e; border-radius: 32px; overflow: hidden; box-shadow: 0 8px 88px rgba(200, 16, 46, .13); }
.map-canvas { display: block; width: 1788px; height: 836px; }
.map-canvas path { vector-effect: non-scaling-stroke; stroke: #333; stroke-width: 1.6; stroke-linejoin: round; }
.map-canvas .land { fill: #090909; stroke: none; }
.water, .map-canvas .water { fill: #262626; stroke: none; }
.map-canvas .r1 { fill: #8f0f21; }
.map-canvas .r2 { fill: #740e1b; }
.map-canvas .r3 { fill: #a04452; }
.map-canvas .b1 { fill: #3d557d; }
.map-canvas .b2 { fill: #002963; }
.map-canvas .b3 { fill: #031a3f; }
.map-canvas .gr { fill: #515965; }
.map-canvas .flat { stroke: none; }
.map-canvas .river { fill: none; stroke: #242424; stroke-width: 1.2; }
.map-canvas .riverw { fill: none; stroke: #262626; stroke-width: 2.5; }
.map-canvas .edge { fill: none; stroke: #333; stroke-width: 1.5; }
.map-canvas .coast { fill: none; stroke: #161416; stroke-width: 2; }
.map-canvas .vein { fill: none; stroke: rgba(200, 60, 90, .14); stroke-width: 1; }
.map-canvas .seam1 { fill: none; stroke: #8f0f21; stroke-width: 3; }
.map-canvas .seam2 { fill: none; stroke: #740e1b; stroke-width: 3; }
.names { font-family: "Open Sans", sans-serif; font-weight: 700; }
.name-us { font-size: 21px; fill: #fff; opacity: .09; }
.name-other { font-size: 23px; fill: #3e3e3e; stroke: #131313; stroke-width: 3; paint-order: stroke; }
.name-small { font-size: 21px; }
.zoom { position: absolute; left: 24px; top: 24px; width: 60px; border-radius: 4px; background: #fff; box-shadow: 0 0 3px 4px #1e1e1e; }
.zoom-btn { display: block; height: 60px; color: #000; font: 700 44px/56px "Liberation Mono", monospace; text-align: center; }
.zoom-btn:first-child { border-bottom: 2px solid #ccc; }
.attribution { position: absolute; right: 0; bottom: 0; display: flex; align-items: center; justify-content: space-between; width: 452px; height: 34px; padding: 0 10px; background: #d4d4d4; color: #333; font: 24px/34px "Liberation Sans", sans-serif; white-space: nowrap; }
.flag { width: 24px; height: 16px; }
.leaflet { color: #0078a8; }

.legend { display: flex; flex-wrap: wrap; justify-content: center; gap: 16px 40px; margin-top: 32px; font-size: 24px; line-height: 32px; letter-spacing: .15px; }
.key { display: flex; align-items: center; gap: 16px; }
.key b { font-weight: 400; }
.swatch { width: 24px; height: 24px; border: 2px solid rgba(255, 255, 255, .15); border-radius: 6px; }
.s-r15 { background: #a00e24; }
.s-r5 { background: #c8102e; }
.s-rt { background: #dc566d; }
.s-dt { background: #4f70aa; }
.s-d5 { background: #003087; }
.s-green { background: #22c55e; box-shadow: 0 0 0 4px #154425; }
.s-amber { background: #fbb823; box-shadow: 0 0 0 4px #604711; }
.s-gray { background: #6b7280; }
.meta { margin-top: 16px; text-align: center; font-size: 20px; line-height: 30px; color: #6b7280; letter-spacing: -.17px; }
.meta-link { color: #fff; letter-spacing: -.07px; }
.meta-seats { letter-spacing: -.35px; }

.explain { max-width: 1024px; margin: 33px auto 0; text-align: center; letter-spacing: -.05px; }
.explain strong { color: #fff; }
.stats { display: flex; justify-content: center; gap: 32px; margin-top: 63px; }
.stat { display: flex; align-items: center; height: 144px; padding: 0 64px; border-radius: 32px; background: #1b1b1d; box-shadow: 0 16px 40px rgba(0, 0, 0, .25); white-space: nowrap; }
.stat-risk { width: 536px; }
.stat-primary { width: 558px; }
.stat-num { margin-left: 25px; color: #c8102e; font-size: 72px; line-height: 80px; font-weight: 700; }
.stat-note { margin-left: 16px; color: #6b7280; font-size: 24px; letter-spacing: -.15px; }
.hint { margin-top: 48px; text-align: center; color: #6b7280; font-size: 24px; line-height: 32px; letter-spacing: .06px; }

.cards { display: grid; grid-template-columns: 1fr 1fr; gap: 32px; margin-top: 32px; }
.card { height: 234px; padding: 40px; border: 2px solid #2c2c30; border-radius: 32px; background: #1b1b1d; }
.card-head { display: flex; justify-content: space-between; align-items: flex-start; }
.card h2 { color: #c8102e; font-size: 24px; line-height: 32px; letter-spacing: .45px; }
.badge { width: 237px; height: 56px; border: 2px solid #242427; border-radius: 28px; color: #646467; font-size: 20px; line-height: 53px; font-weight: 700; text-align: center; letter-spacing: .83px; white-space: nowrap; }
.card p { margin-top: 16px; color: #fff; line-height: 38px; }
.reset { margin-top: 51px; text-align: center; }
.reset-link { text-decoration: underline; }
```
